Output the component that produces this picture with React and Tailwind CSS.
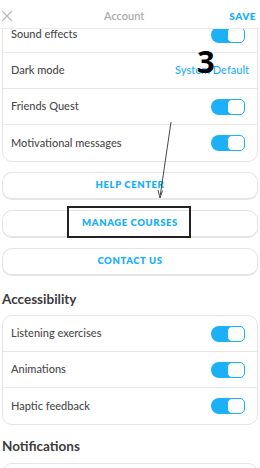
import React from "react";

function Toggle() {
  return (
    <div className="relative w-[34px] h-[16px]">
      <div className="absolute inset-0 rounded-full bg-[#1cb0f6]" />
      <div className="absolute right-0 top-0 w-[18px] h-[16px] rounded-[5px] bg-white border-[1.5px] border-[#1cb0f6]" />
    </div>
  );
}

function Row({ label, right, last }) {
  return (
    <div className={`flex items-center justify-between h-[36px] pl-[8px] pr-[12px] ${last ? "" : "border-b border-[#e5e5e5]"}`}>
      <span className="text-[11px] font-medium text-[#4b4b4b]">{label}</span>
      {right}
    </div>
  );
}

function Card({ children }) {
  return <div className="mx-[2px] border border-[#e5e5e5] rounded-[10px] bg-white">{children}</div>;
}

function Btn({ children }) {
  return (
    <div className="mx-[2px] h-[28px] flex items-center justify-center border border-[#e5e5e5] border-b-2 rounded-[10px] bg-white">
      <span className="text-[9.5px] font-extrabold tracking-[0.6px] text-[#1cb0f6]">{children}</span>
    </div>
  );
}

export default function App() {
  return (
    <div className="relative w-[260px] h-[468px] overflow-hidden bg-white" style={{ fontFamily: "Lato, 'Noto Sans', sans-serif" }}>
      <div className="absolute top-0 left-0 right-0 h-[29px] bg-white border-b border-[#ececec] z-10 flex items-center justify-between px-[1px]">
        <svg width="12" height="12" viewBox="0 0 12 12" className="mt-[4px]">
          <path d="M1 1 L11 11 M11 1 L1 11" stroke="#b8b8b8" strokeWidth="1.1" />
        </svg>
        <span className="text-[11px] font-medium text-[#a5a5a5] mt-[4px] ml-[6px]">Account</span>
        <span className="text-[10px] font-extrabold tracking-[0.5px] text-[#1cb0f6] mr-[3px] mt-[4px]">SAVE</span>
      </div>

      <div className="pt-[16px]">
        <Card>
          <Row label="Sound effects" right={<Toggle />} />
          <Row label="Dark mode" right={<span className="text-[11px] font-medium text-[#1cb0f6] -mr-[4px]">System Default</span>} />
          <Row label="Friends Quest" right={<Toggle />} />
          <Row label="Motivational messages" right={<Toggle />} last />
        </Card>

        <div className="flex flex-col gap-[10px] mt-[10px]">
          <Btn>HELP CENTER</Btn>
          <Btn>MANAGE COURSES</Btn>
          <Btn>CONTACT US</Btn>
        </div>

        <div className="px-[2px] mt-[13px] h-[26px] text-[13.5px] font-bold text-[#3c3c3c]">Accessibility</div>
        <Card>
          <Row label="Listening exercises" right={<Toggle />} />
          <Row label="Animations" right={<Toggle />} />
          <Row label="Haptic feedback" right={<Toggle />} last />
        </Card>

        <div className="px-[2px] mt-[11px] h-[27px] text-[13.5px] font-bold text-[#3c3c3c]">Notifications</div>
        <Card>
          <Row label="" right={null} />
        </Card>
      </div>

      {/* annotation overlay */}
      <div className="absolute left-[67px] top-[206px] w-[124px] h-[32px] border-2 border-[#222]" />
      <div className="absolute left-[197px] top-[46px] text-[31px] font-bold leading-none text-black" style={{ fontFamily: "'Open Sans', sans-serif" }}>3</div>
      <svg className="absolute left-0 top-0" width="260" height="468" viewBox="0 0 260 468">
        <line x1="171" y1="122" x2="160.3" y2="195" stroke="#333" strokeWidth="0.9" />
        <path d="M158 190 L160 198 L162.5 190.5" fill="none" stroke="#333" strokeWidth="0.9" />
      </svg>
    </div>
  );
}
